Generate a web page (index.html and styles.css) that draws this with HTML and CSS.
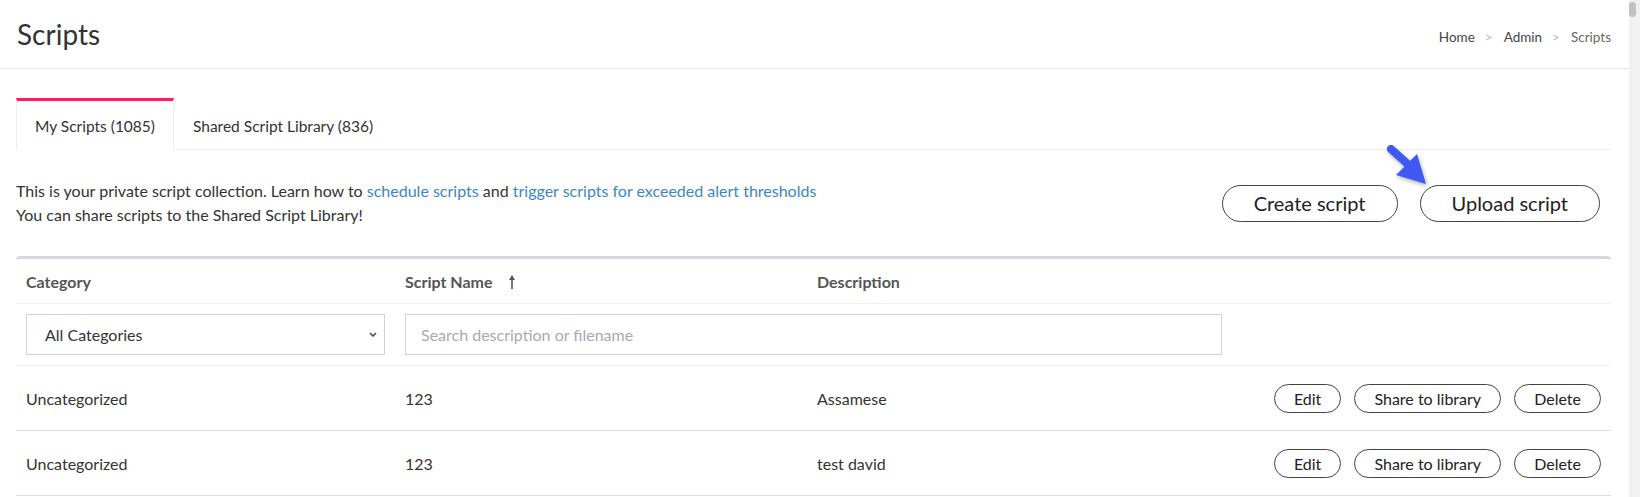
FILE: index.html
```html
<!DOCTYPE html>
<html lang="en">
<head>
    <meta charset="UTF-8">
    <meta name="viewport" content="width=device-width, initial-scale=1.0">
    <title>Scripts</title>
    <link rel="stylesheet" href="styles.css">
</head>
<body>
    <header class="page-header">
        <h1>Scripts</h1>
        <nav class="breadcrumb">
            <a href="#">Home</a><span class="sep">&gt;</span><a href="#">Admin</a><span class="sep">&gt;</span><span class="current">Scripts</span>
        </nav>
    </header>

    <main class="content">
        <ul class="tabs">
            <li class="tab active">My Scripts (1085)</li>
            <li class="tab">Shared Script Library (836)</li>
        </ul>

        <div class="intro">
            <p>
                This is your private script collection. Learn how to <a href="#">schedule scripts</a> and <a href="#">trigger scripts for exceeded alert thresholds</a><br>
                You can share scripts to the Shared Script Library!
            </p>
            <div class="intro-actions">
                <!-- pointer drawn over the upload button -->
                <svg class="hint-arrow" width="56" height="56" viewBox="0 0 56 56">
                    <line x1="11" y1="11" x2="31" y2="29" stroke="#4059f2" stroke-width="8" stroke-linecap="round"/>
                    <polygon points="16,37 37,16 46,46" fill="#4059f2"/>
                </svg>
                <button class="pill-btn large">Create script</button>
                <button class="pill-btn large">Upload script</button>
            </div>
        </div>

        <table class="scripts-table">
            <colgroup>
                <col class="col-category">
                <col class="col-name">
                <col class="col-desc">
                <col>
            </colgroup>
            <thead>
                <tr>
                    <th>Category</th>
                    <th>Script Name
                        <svg class="sort-icon" width="8" height="14" viewBox="0 0 8 14">
                            <line x1="4" y1="4" x2="4" y2="14" stroke="#555" stroke-width="1.6"/>
                            <polygon points="1,5 4,0 7,5" fill="#555"/>
                        </svg>
                    </th>
                    <th>Description</th>
                    <th></th>
                </tr>
                <tr class="filter-row">
                    <td>
                        <div class="select-wrap">
                            <select>
                                <option>All Categories</option>
                                <option>Uncategorized</option>
                            </select>
                            <svg class="chevron" width="8" height="5" viewBox="0 0 8 5">
                                <polyline points="1,1 4,4 7,1" fill="none" stroke="#444" stroke-width="1.5"/>
                            </svg>
                        </div>
                    </td>
                    <td colspan="2">
                        <input type="text" placeholder="Search description or filename">
                    </td>
                    <td></td>
                </tr>
            </thead>
            <tbody>
                <tr>
                    <td>Uncategorized</td>
                    <td>123</td>
                    <td>Assamese</td>
                    <td class="row-actions">
                        <button class="pill-btn">Edit</button>
                        <button class="pill-btn">Share to library</button>
                        <button class="pill-btn">Delete</button>
                    </td>
                </tr>
                <tr>
                    <td>Uncategorized</td>
                    <td>123</td>
                    <td>test david</td>
                    <td class="row-actions">
                        <button class="pill-btn">Edit</button>
                        <button class="pill-btn">Share to library</button>
                        <button class="pill-btn">Delete</button>
                    </td>
                </tr>
            </tbody>
        </table>
    </main>
</body>
</html>
```

FILE: styles.css
```css
/* grey rail on the right for the scrollbar */
html {
    background: #f1f1f1;
}
body {
    margin: 0 11px 0 0;
    min-height: 100vh;
    background: #fff;
    font-family: Lato, "Liberation Sans", sans-serif;
    font-size: 16px;
    color: #333;
}
body::after {
    content: "";
    position: fixed;
    top: 2px;
    right: 4px;
    width: 7px;
    height: 15px;
    border-radius: 4px;
    background: #c1c1c1;
}
a {
    color: #3b87c6;
    text-decoration: none;
}

/* page title bar */
.page-header {
    display: flex;
    justify-content: space-between;
    align-items: center;
    height: 68px;
    padding: 0 18px 0 17px;
    border-bottom: 1px solid #e6e6e6;
}
.page-header h1 {
    margin: 0;
    font-size: 28px;
    font-weight: 400;
    color: #333;
}
.breadcrumb {
    font-size: 13.5px;
    padding-top: 6px;
}
.breadcrumb a {
    color: #444;
}
.breadcrumb .sep {
    color: #bbb;
    margin: 0 11px 0 10px;
}
.breadcrumb .current {
    color: #666;
}

.content {
    padding: 0 18px 0 16px;
}

/* tabs */
.tabs {
    display: flex;
    list-style: none;
    margin: 29px 0 0;
    padding: 0;
    border-bottom: 1px solid #eee;
}
.tab {
    padding: 2px 18px 0;
    line-height: 46px;
    border-top: 3px solid transparent;
    border-left: 1px solid transparent;
    border-right: 1px solid transparent;
    margin-bottom: -1px;
    font-size: 15.5px;
    color: #333;
    cursor: pointer;
}
.tab.active {
    border-top-color: #ff1a6b;
    border-left-color: #eee;
    border-right-color: #eee;
    border-bottom: 1px solid #fff;
}

/* intro text + main buttons */
.intro {
    display: flex;
    justify-content: space-between;
    align-items: center;
    margin: 29px 0;
    padding-right: 11px;
}
.intro p {
    margin: 0;
    line-height: 24px;
}
.intro-actions {
    position: relative;
    display: flex;
    gap: 22px;
}
.hint-arrow {
    position: absolute;
    left: 158px;
    top: -47px;
    filter: drop-shadow(1px 2px 2px rgba(0, 0, 0, 0.3));
}

.pill-btn {
    font-family: inherit;
    font-size: 16px;
    color: #222;
    background: #fff;
    border: 1px solid #444;
    border-radius: 15px;
    height: 29px;
    padding: 0 19px;
    cursor: pointer;
}
.pill-btn.large {
    font-size: 20px;
    height: 37px;
    padding: 0 31px;
    border-radius: 19px;
}

/* scripts table */
.scripts-table {
    width: 100%;
    table-layout: fixed;
    border-collapse: separate;
    border-spacing: 0;
    border-top: 3px solid #d5d8e1;
    border-radius: 4px 4px 0 0;
}
.col-category {
    width: 379px;
}
.col-name {
    width: 412px;
}
.col-desc {
    width: 425px;
}
.scripts-table th {
    height: 44px;
    padding: 0 10px;
    text-align: left;
    font-weight: 700;
    color: #555;
    border-bottom: 1px solid #efefef;
}
.sort-icon {
    margin-left: 12px;
    vertical-align: -1px;
}
.scripts-table td {
    height: 64px;
    padding: 0 10px;
    color: #333;
    border-bottom: 1px solid #dcdcdc;
}
.filter-row td {
    height: auto;
    padding: 10px;
    border-bottom: 1px solid #f2f2f2;
}
.select-wrap {
    position: relative;
}
.select-wrap .chevron {
    position: absolute;
    right: 8px;
    top: 18px;
    pointer-events: none;
}
.filter-row select,
.filter-row input {
    display: block;
    width: 100%;
    box-sizing: border-box;
    height: 41px;
    border: 1px solid #cfd2dd;
    border-radius: 0;
    background: #fff;
    font-family: inherit;
    font-size: 16px;
    color: #333;
    outline: none;
}
.filter-row select {
    appearance: none;
    padding: 0 18px;
}
.filter-row input {
    padding: 0 15px;
}
.filter-row input::placeholder {
    color: #aaa;
}
.row-actions {
    text-align: right;
    white-space: nowrap;
}
.row-actions .pill-btn {
    margin-left: 9px;
}
```
